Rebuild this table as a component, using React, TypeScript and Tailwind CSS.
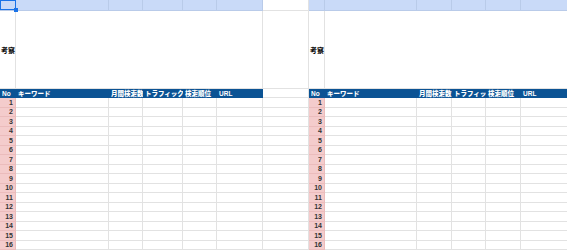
import React from "react";

const FONT = "font-['Liberation_Sans','Noto_Sans_CJK_JP',sans-serif]";
const headers = ["No", "キーワード", "月間検索数", "トラフィック", "検索順位", "URL"];

function TopRow() {
  const blue = (key: string, extra = "") => (
    <div key={key} className={`bg-[#c9daf8] border-r border-b border-[#b9cbe9] ${extra}`} />
  );
  return (
    <>
      <div className="relative bg-[#c9daf8] border-b border-[#b9cbe9]">
        <div className="absolute inset-0 border border-[#1a73e8]" />
        <div className="absolute right-[-2px] bottom-[-2px] w-[4px] h-[4px] bg-[#1a73e8] z-10" />
      </div>
      {blue("l1")}
      {blue("l2")}
      {blue("l3")}
      {blue("l4")}
      {blue("l5")}
      <div className="bg-white border-r border-b border-[#e2e2e2]" />
      {blue("r0")}
      {blue("r1")}
      {blue("r2")}
      {blue("r3")}
      {blue("r4")}
      {blue("r5", "border-r-0")}
    </>
  );
}

function MergedRow() {
  const label = (key: string) => (
    <div key={key} className="flex items-center pl-[1px] pt-[1px] border-r border-b border-[#e2e2e2] bg-white">
      <span className="text-[7px] font-black text-[#111] leading-none">考察</span>
    </div>
  );
  return (
    <>
      {label("l")}
      <div className="col-span-5 bg-white border-r border-b border-[#e2e2e2]" />
      <div className="bg-white border-r border-b border-[#e2e2e2]" />
      {label("r")}
      <div className="col-span-5 bg-white border-b border-[#e2e2e2]" />
    </>
  );
}

function HeaderRow() {
  const side = (p: string) =>
    headers.map((h, i) => (
      <div
        key={p + i}
        className="bg-[#0b5394] flex items-center pl-[2px] pt-[1px] overflow-hidden whitespace-nowrap"
      >
        <span className="text-[6.5px] font-black text-white leading-none">{h}</span>
      </div>
    ));
  return (
    <>
      {side("l")}
      <div className="bg-white border-r border-b border-[#e2e2e2]" />
      {side("r")}
    </>
  );
}

function DataRow({ n }: { n: number }) {
  const side = (p: string, last: boolean) => (
    <>
      <div
        key={p + "no"}
        className="bg-[#f4cccc] flex items-center justify-end pr-[2px] border-r border-b border-[#ebbcbc]"
      >
        <span className="text-[7px] font-bold text-[#333] leading-none">{n}</span>
      </div>
      {[1, 2, 3, 4, 5].map((i) => (
        <div
          key={p + i}
          className={`bg-white border-b border-[#e2e2e2] ${i === 5 && last ? "" : "border-r"}`}
        />
      ))}
    </>
  );
  return (
    <>
      {side("l", false)}
      <div className="bg-white border-r border-b border-[#e2e2e2]" />
      {side("r", true)}
    </>
  );
}

export default function App() {
  return (
    <div className={`w-[567px] h-[250px] overflow-hidden bg-white ${FONT}`}>
      <div className="grid grid-cols-[16px_93px_34px_40px_34px_46px_46px_16px_92px_35px_34px_35px_46px] grid-rows-[11px_78px_9px_repeat(16,9.5px)]">
        <TopRow />
        <MergedRow />
        <HeaderRow />
        {Array.from({ length: 16 }, (_, i) => (
          <React.Fragment key={i}>
            <DataRow n={i + 1} />
          </React.Fragment>
        ))}
      </div>
    </div>
  );
}
